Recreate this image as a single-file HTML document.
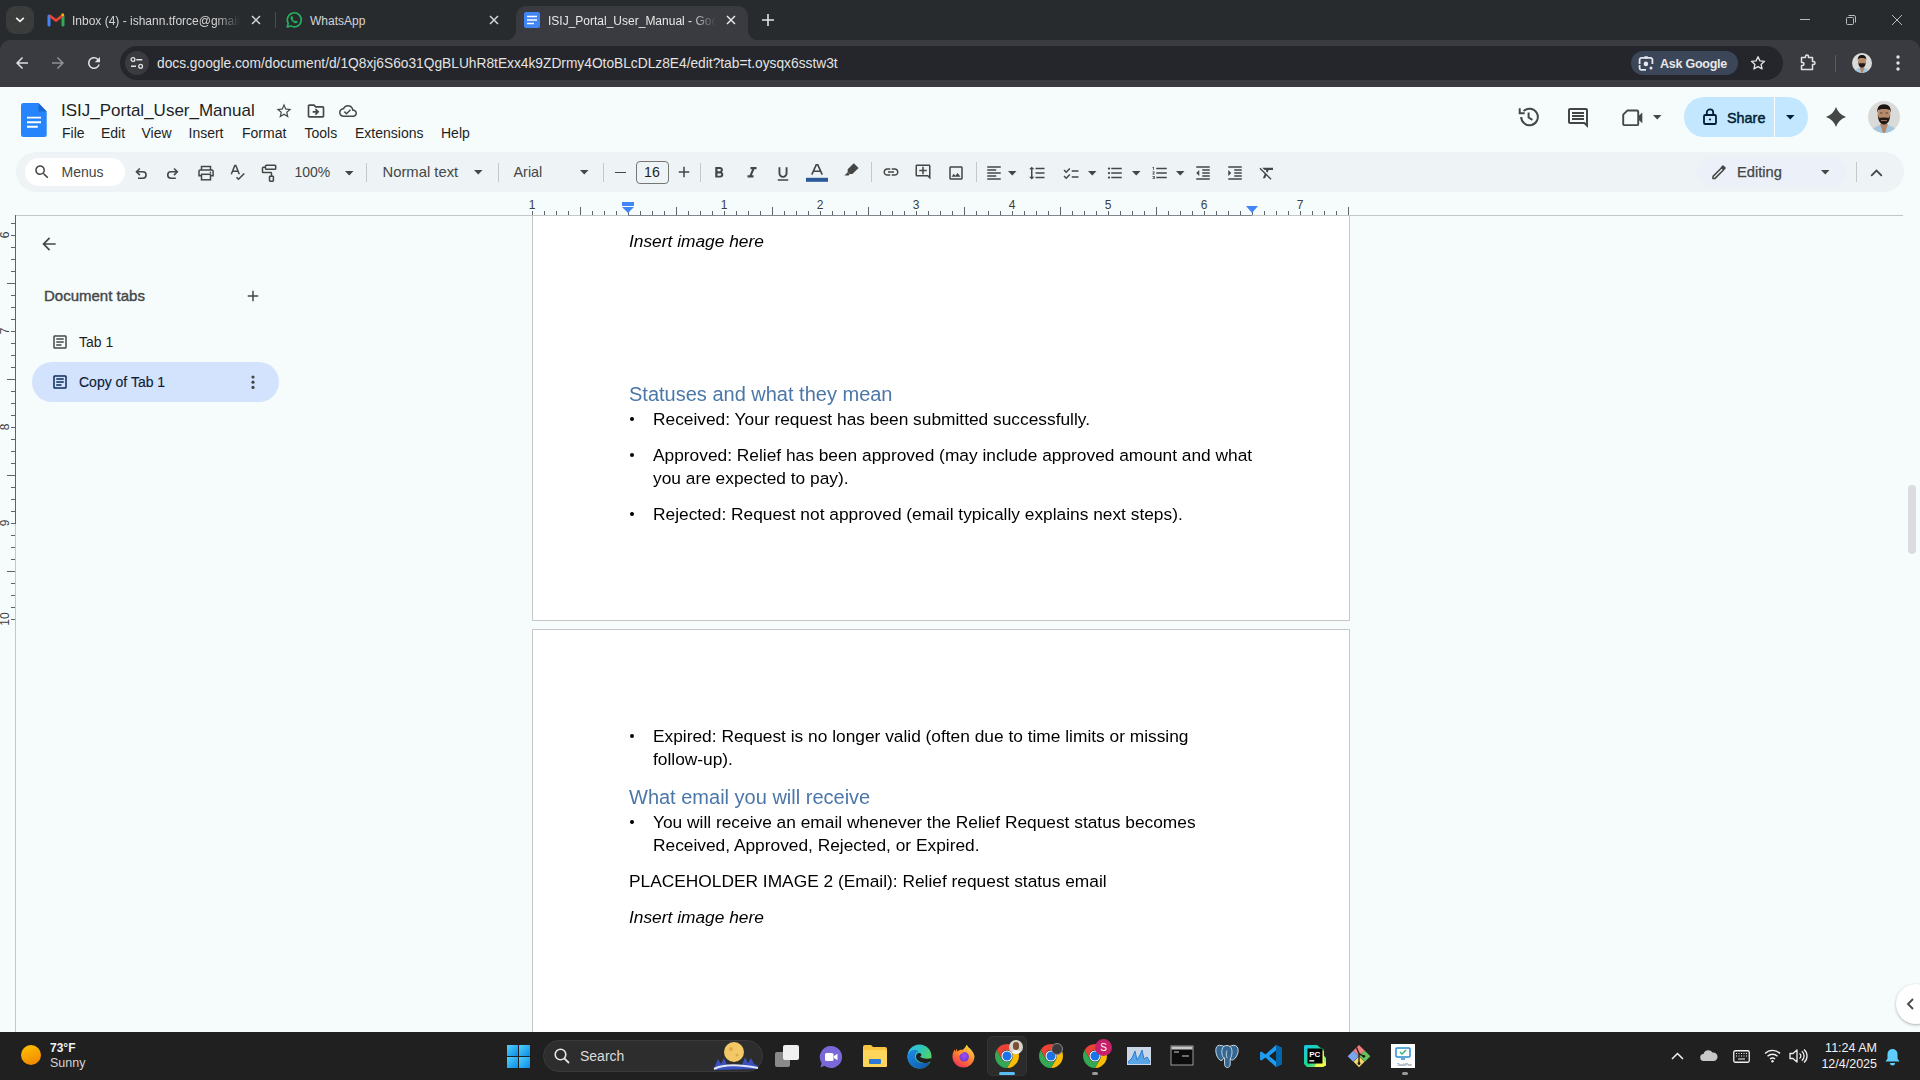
<!DOCTYPE html>
<html><head><meta charset="utf-8">
<style>
*{box-sizing:border-box;margin:0;padding:0}
html,body{width:1920px;height:1080px;overflow:hidden;background:#f6fcfc;font-family:"Liberation Sans",sans-serif}
.a{position:absolute}
svg{position:absolute;overflow:visible}
#tabstrip{left:0;top:0;width:1920px;height:87px;background:#282b2e}
#toolbar{left:0;top:40px;width:1920px;height:47px;background:#393b40;border-radius:10px 10px 0 0}
#omni{left:120px;top:46px;width:1663px;height:34px;border-radius:17px;background:#24262b}
.ttl{color:#e3e3e3;font-size:12px;white-space:nowrap}
#docs{left:0;top:87px;width:1920px;height:945px;background:#f6fcfc}
.menu{font-size:14px;color:#1f1f1f;top:125px}
.tb{left:16px;top:152px;width:1888px;height:40px;border-radius:20px;background:#eef3f6}
.page{background:#fff;border:1px solid #c7c7c7}
.dt{font-size:17.33px;color:#000;white-space:nowrap;line-height:23px;will-change:transform}
.it{font-style:italic}
.rl{font-size:12px;color:#3c4043;text-align:center;line-height:12px}
.bul{left:630px;width:4.2px;height:4.2px;border-radius:50%;background:#000;margin-top:0.4px}
.h2{font-size:20px;color:#4b77a8;white-space:nowrap;line-height:24px;will-change:transform}
#taskbar{left:0;top:1032px;width:1920px;height:48px;background:#202020}
</style></head><body>
<div id="tabstrip" class="a"></div>
<div id="toolbar" class="a"></div>
<div id="omni" class="a"></div>

<!-- tab strip -->
<div class="a" style="left:6px;top:6px;width:28px;height:28px;border-radius:9px;background:#3a3b3b"></div>
<svg style="left:15px;top:16px" width="10" height="8"><path d="M1.2 1.8 L5 5.4 L8.8 1.8" stroke="#f0f0f0" stroke-width="1.7" fill="none"/></svg>
<!-- gmail -->
<svg style="left:48px;top:13px" width="16" height="13" viewBox="0 0 16 13">
<path d="M1 12V3" stroke="#4285f4" stroke-width="3" stroke-linecap="round"/>
<path d="M15 12V3" stroke="#34a853" stroke-width="3" stroke-linecap="round"/>
<path d="M1.5 2.5 L8 7.5 L14.5 2.5" stroke="#ea4335" stroke-width="2.8" fill="none" stroke-linejoin="round"/>
<path d="M13.5 1.8 L14.8 1.5 L15.2 3" stroke="#fbbc04" stroke-width="2" fill="none"/>
</svg>
<div class="a ttl" style="left:72px;top:13.5px;width:168px;overflow:hidden;color:#d5d5d5;-webkit-mask-image:linear-gradient(90deg,#000 85%,transparent)">Inbox (4) - ishann.tforce@gmail.com</div>
<svg style="left:251px;top:15px" width="10" height="10"><path d="M1 1L9 9M9 1L1 9" stroke="#d5d5d5" stroke-width="1.5"/></svg>
<div class="a" style="left:275px;top:12px;width:1px;height:16px;background:#4a4b4f"></div>
<!-- whatsapp -->
<svg style="left:285px;top:11px" width="18" height="18" viewBox="0 0 18 18">
<path d="M2.2 16 L3.2 12.3 A7 7 0 1 1 5.8 14.9 Z" fill="none" stroke="#25b060" stroke-width="1.6" stroke-linejoin="round"/>
<path d="M6.3 5.4c.3-.4.8-.5 1.1 0l.7 1.4c.1.3 0 .6-.2.8l-.4.4c.5 1 1.3 1.8 2.3 2.3l.4-.4c.2-.2.5-.3.8-.2l1.4.7c.4.3.4.8 0 1.1-.6.7-1.4 1-2.3.7-2-.8-3.6-2.4-4.4-4.4-.3-.9 0-1.8.6-2.4z" fill="#25b060"/>
</svg>
<div class="a ttl" style="left:310px;top:13.5px;color:#d5d5d5">WhatsApp</div>
<svg style="left:489px;top:15px" width="10" height="10"><path d="M1 1L9 9M9 1L1 9" stroke="#d5d5d5" stroke-width="1.5"/></svg>
<!-- active tab -->
<div class="a" style="left:516px;top:6px;width:232px;height:40px;border-radius:10px 10px 0 0;background:#393b40"></div>
<div class="a" style="left:506px;top:30px;width:10px;height:10px;background:radial-gradient(circle at 0 0,transparent 10px,#393b40 10.5px)"></div>
<div class="a" style="left:748px;top:30px;width:10px;height:10px;background:radial-gradient(circle at 100% 0,transparent 10px,#393b40 10.5px)"></div>
<svg style="left:524px;top:12px" width="16" height="16" viewBox="0 0 16 16"><rect x="0" y="0" width="16" height="16" rx="2" fill="#4285f4"/><path d="M3 4.5H13M3 8H13M3 11.5H10" stroke="#fff" stroke-width="1.6"/></svg>
<div class="a ttl" style="left:548px;top:13.5px;width:168px;overflow:hidden;color:#e8e8e8;-webkit-mask-image:linear-gradient(90deg,#000 85%,transparent)">ISIJ_Portal_User_Manual - Google Docs</div>
<svg style="left:726px;top:15px" width="10" height="10"><path d="M1 1L9 9M9 1L1 9" stroke="#e8e8e8" stroke-width="1.5"/></svg>
<svg style="left:762px;top:14px" width="12" height="12"><path d="M6 0V12M0 6H12" stroke="#e3e3e3" stroke-width="1.6"/></svg>
<!-- window controls -->
<div class="a" style="left:1800px;top:19px;width:10px;height:1px;background:#b9b9b9"></div>
<svg style="left:1846px;top:15px" width="10" height="10"><rect x="0.5" y="2.5" width="7" height="7" rx="1" stroke="#b9b9b9" fill="none"/><path d="M2.5 0.5H8a1.5 1.5 0 0 1 1.5 1.5V7.5" stroke="#b9b9b9" fill="none"/></svg>
<svg style="left:1892px;top:15px" width="10" height="10"><path d="M0 0L10 10M10 0L0 10" stroke="#b9b9b9" stroke-width="1"/></svg>
<!-- toolbar icons -->
<svg style="left:13px;top:54px" width="18" height="18" viewBox="0 0 24 24"><path d="M20 11H7.83l5.59-5.59L12 4l-8 8 8 8 1.41-1.41L7.83 13H20v-2z" fill="#dfe1e5"/></svg>
<svg style="left:49px;top:54px" width="18" height="18" viewBox="0 0 24 24"><path d="M12 4l-1.41 1.41L16.17 11H4v2h12.17l-5.58 5.59L12 20l8-8z" fill="#8e9196"/></svg>
<svg style="left:84.8px;top:53.9px" width="18" height="18" viewBox="0 0 24 24"><path d="M17.65 6.35A7.958 7.958 0 0 0 12 4c-4.42 0-7.99 3.58-7.99 8s3.57 8 7.99 8c3.73 0 6.84-2.55 7.73-6h-2.08A5.99 5.99 0 0 1 12 18c-3.31 0-6-2.69-6-6s2.69-6 6-6c1.66 0 3.14.69 4.22 1.78L13 11h7V4l-2.35 2.35z" fill="#dfe1e5"/></svg>
<div class="a" style="left:125px;top:51px;width:24px;height:24px;border-radius:12px;background:#393b40"></div>
<svg style="left:130px;top:56px" width="14" height="14" viewBox="0 0 14 14"><circle cx="3" cy="3.5" r="1.9" stroke="#e3e3e3" stroke-width="1.3" fill="none"/><path d="M6.3 3.7H12.3M1 10.3H6" stroke="#e3e3e3" stroke-width="1.4"/><circle cx="10.6" cy="10.3" r="1.9" stroke="#e3e3e3" stroke-width="1.3" fill="none"/></svg>
<div class="a" style="left:157px;top:55.5px;font-size:13.75px;color:#e3e3e3;white-space:nowrap;letter-spacing:0px">docs.google.com/document/d/1Q8xj6S6o31QgBLUhR8tExx4k9ZDrmy4OtoBLcDLz8E4/edit?tab=t.oysqx6sstw3t</div>
<div class="a" style="left:1631px;top:51px;width:107px;height:23.5px;border-radius:12px;background:#3b4658"></div>
<svg style="left:1638px;top:55px" width="16" height="17" viewBox="0 0 16 17"><path d="M1.6 9V4.8A1.9 1.9 0 0 1 3.5 2.9H12.5A1.9 1.9 0 0 1 14.4 4.8V9" stroke="#e6e8ee" stroke-width="1.8" fill="none"/><rect x="6.3" y="1.2" width="3.6" height="2.2" rx=".6" fill="#e6e8ee"/><path d="M1.6 10V13A1.9 1.9 0 0 0 3.5 14.9H8" stroke="#e6e8ee" stroke-width="1.8" fill="none"/><circle cx="7.9" cy="8.9" r="2.3" fill="#e6e8ee"/><circle cx="13" cy="13" r="1.5" fill="#e6e8ee"/></svg>
<div class="a" style="left:1660px;top:57px;font-size:12.5px;font-weight:bold;color:#e8e8e8;white-space:nowrap;letter-spacing:-0.25px;line-height:15px">Ask Google</div>
<svg style="left:1750px;top:55px" width="16" height="16" viewBox="0 0 24 24"><path d="M12 2.5l2.9 6.3 6.9.7-5.2 4.6 1.5 6.8L12 17.4l-6.1 3.5 1.5-6.8-5.2-4.6 6.9-.7z" stroke="#e3e3e3" stroke-width="2" fill="none" stroke-linejoin="round"/></svg>
<svg style="left:1800px;top:54px" width="17" height="17" viewBox="0 0 17 17"><path d="M1.5 3.5H5.5V2.5a1.5 1.5 0 0 1 3 0V3.5H12.5V7.5h1a1.5 1.5 0 0 1 0 3h-1V15.5H1.5V11.5h1a1.5 1.5 0 0 0 0-3h-1z" stroke="#e3e3e3" stroke-width="1.5" fill="none" stroke-linejoin="round"/></svg>
<div class="a" style="left:1835px;top:55px;width:1px;height:17px;background:#5a5b5e"></div>
<svg style="left:1852px;top:53px" width="20" height="20" viewBox="0 0 32 32"><defs><clipPath id="av2"><circle cx="16" cy="16" r="16"/></clipPath></defs><g clip-path="url(#av2)"><rect width="32" height="32" fill="#dadad8"/><path d="M2 32C4 27 9 25 12 24H20C23 25 28 27 30 32Z" fill="#a6c6de"/><path d="M12 23H20L17 32H15Z" fill="#b48a6c"/><ellipse cx="16" cy="13.5" rx="6.3" ry="8" fill="#b58b6b"/><path d="M9.2 12C9 6 11.5 3.3 16 3.3S23.2 6 22.8 12L21.8 9C20 7.5 12 7.5 10.2 9Z" fill="#1a1512"/><path d="M9.8 14C10 19 12 23.5 16 23.5S22 19 22.2 14L21 17C19.5 16.3 12.5 16.3 11 17Z" fill="#231a16"/></g></svg>
<svg style="left:1896px;top:55px" width="4" height="16"><circle cx="2" cy="2" r="1.7" fill="#e3e3e3"/><circle cx="2" cy="8" r="1.7" fill="#e3e3e3"/><circle cx="2" cy="14" r="1.7" fill="#e3e3e3"/></svg>

<div id="docs" class="a"></div>
<div class="a tb"></div>
<div class="a page" style="left:532px;top:215px;width:818px;height:406px;border-top:none"></div>
<div class="a page" style="left:532px;top:629px;width:818px;height:420px"></div>

<!--HEADER-->
<svg style="left:21px;top:103px" width="26" height="34" viewBox="0 0 26 34"><path d="M2.5 0H17.5L25.7 8.6V31.5A2.5 2.5 0 0 1 23.2 34H2.5A2.5 2.5 0 0 1 0 31.5V2.5A2.5 2.5 0 0 1 2.5 0Z" fill="#2684fc"/><path d="M17.5 0L25.7 8.6H17.5Z" fill="#1a68d6"/><path d="M6 14.6H20M6 19.3H20M6 23.8H16.8" stroke="#fff" stroke-width="1.9"/></svg>
<div class="a" style="left:61px;top:101px;font-size:17px;color:#1f1f1f;white-space:nowrap;line-height:16px;line-height:20px">ISIJ_Portal_User_Manual</div>
<svg style="left:275px;top:102px" width="18" height="18" viewBox="0 0 24 24"><path d="M22 9.24l-7.19-.62L12 2 9.19 8.63 2 9.24l5.46 4.73L5.82 21 12 17.27 18.18 21l-1.63-7.03L22 9.24zM12 15.4l-3.76 2.27 1-4.28-3.32-2.88 4.38-.38L12 6.1l1.71 4.04 4.38.38-3.32 2.88 1 4.28L12 15.4z" fill="#444746"/></svg>
<svg style="left:306px;top:101px" width="20" height="20" viewBox="0 0 24 24"><path d="M20 6h-8l-2-2H4c-1.1 0-1.99.9-1.99 2L2 18c0 1.1.9 2 2 2h16c1.1 0 2-.9 2-2V8c0-1.1-.9-2-2-2zm0 12H4V6h5.17l2 2H20v10zm-7.84-6H8v2h4.16l-1.59 1.59L11.99 17 16 13.01 11.99 9l-1.41 1.41L12.16 12z" fill="#444746"/></svg>
<svg style="left:339px;top:102px" width="18" height="18" viewBox="0 0 24 24"><path d="M19.35 10.04C18.67 6.59 15.64 4 12 4 9.11 4 6.6 5.64 5.35 8.04 2.34 8.36 0 10.91 0 14c0 3.31 2.69 6 6 6h13c2.76 0 5-2.24 5-5 0-2.64-2.05-4.78-4.65-4.96zM19 18H6c-2.21 0-4-1.79-4-4 0-2.05 1.53-3.76 3.56-3.97l1.07-.11.5-.95C8.08 7.14 9.94 6 12 6c2.62 0 4.88 1.86 5.39 4.43l.3 1.5 1.53.11c1.56.1 2.78 1.41 2.78 2.96 0 1.65-1.35 3-3 3zm-9-3.82l-2.09-2.09L6.5 13.5 10 17l6.01-6.01-1.41-1.41z" fill="#444746"/></svg>
<div class="a" style="left:62px;top:125px;font-size:14px;color:#1f1f1f;white-space:nowrap;line-height:16px;">File</div>
<div class="a" style="left:101px;top:125px;font-size:14px;color:#1f1f1f;white-space:nowrap;line-height:16px;">Edit</div>
<div class="a" style="left:141.5px;top:125px;font-size:14px;color:#1f1f1f;white-space:nowrap;line-height:16px;">View</div>
<div class="a" style="left:188.5px;top:125px;font-size:14px;color:#1f1f1f;white-space:nowrap;line-height:16px;">Insert</div>
<div class="a" style="left:242px;top:125px;font-size:14px;color:#1f1f1f;white-space:nowrap;line-height:16px;">Format</div>
<div class="a" style="left:304.5px;top:125px;font-size:14px;color:#1f1f1f;white-space:nowrap;line-height:16px;">Tools</div>
<div class="a" style="left:355px;top:125px;font-size:14px;color:#1f1f1f;white-space:nowrap;line-height:16px;">Extensions</div>
<div class="a" style="left:441px;top:125px;font-size:14px;color:#1f1f1f;white-space:nowrap;line-height:16px;">Help</div>
<svg style="left:1517px;top:105px" width="24" height="24" viewBox="0 0 24 24"><path d="M4.2 12A8.3 8.3 0 1 0 6.6 6.1" stroke="#444746" stroke-width="2" fill="none"/><path d="M2.7 3.2V8.2H7.7" stroke="#444746" stroke-width="2" fill="none" stroke-linejoin="miter"/><path d="M11.6 7.5V12.5L15.4 14.8" stroke="#444746" stroke-width="2" fill="none"/></svg>
<svg style="left:1566px;top:106px" width="24" height="24" viewBox="0 0 24 24"><path d="M21.99 4c0-1.1-.89-2-1.99-2H4c-1.1 0-2 .9-2 2v12c0 1.1.9 2 2 2h14l4 4-.01-18zM20 4v13.17L18.83 16H4V4h16zM6 12h12v2H6zm0-3h12v2H6zm0-3h12v2H6z" fill="#444746"/></svg>
<svg style="left:1621px;top:109px" width="24" height="19" viewBox="0 0 24 20"><path d="M6.2 1.5H16.2A1.3 1.3 0 0 1 17.5 2.8V15.7A1.3 1.3 0 0 1 16.2 17H3A1.3 1.3 0 0 1 1.7 15.7V6Z" stroke="#444746" stroke-width="2" fill="none" stroke-linejoin="round"/><path d="M17.5 7.5L21.8 3.6V14.9L17.5 11Z" fill="#444746"/></svg>
<svg style="left:1653px;top:115px" width="9" height="5"><path d="M0 0H8.5L4.25 4.5Z" fill="#444746"/></svg>
<div class="a" style="left:1684px;top:97px;width:124px;height:40px;border-radius:20px;background:#c2e7ff"></div>
<div class="a" style="left:1774px;top:97px;width:1px;height:40px;background:#fbfdff"></div>
<svg style="left:1703px;top:108px" width="14" height="17" viewBox="0 0 14 17"><rect x="1" y="7" width="12" height="9" rx="1.3" stroke="#001d35" stroke-width="1.8" fill="none"/><path d="M3.8 7V4.6A3.2 3.2 0 0 1 10.2 4.6V7" stroke="#001d35" stroke-width="1.8" fill="none"/><circle cx="7" cy="11.5" r="1.1" fill="#001d35"/></svg>
<div class="a" style="left:1727px;top:109px;font-size:14.4px;color:#001d35;white-space:nowrap;line-height:16px;font-weight:normal;-webkit-text-stroke:0.45px #001d35;line-height:18px">Share</div>
<svg style="left:1786px;top:115px" width="9" height="5"><path d="M0 0H8.5L4.25 4.5Z" fill="#001d35"/></svg>
<svg style="left:1826px;top:107px" width="20" height="20" viewBox="0 0 20 20"><path d="M10 0Q12.6 7.4 20 10Q12.6 12.6 10 20Q7.4 12.6 0 10Q7.4 7.4 10 0Z" fill="#444746"/></svg>
<svg style="left:1868px;top:101px" width="32" height="32" viewBox="0 0 32 32"><defs><clipPath id="av"><circle cx="16" cy="16" r="16"/></clipPath></defs><g clip-path="url(#av)"><rect width="32" height="32" fill="#dadad8"/><path d="M2 32C4 27 9 25 12 24H20C23 25 28 27 30 32Z" fill="#a6c6de"/><path d="M12 23H20L17 32H15Z" fill="#b48a6c"/><ellipse cx="16" cy="13.5" rx="6.3" ry="8" fill="#b58b6b"/><path d="M9.2 12C9 6 11.5 3.3 16 3.3S23.2 6 22.8 12L21.8 9C20 7.5 12 7.5 10.2 9Z" fill="#1a1512"/><path d="M9.8 14C10 19 12 23.5 16 23.5S22 19 22.2 14L21 17C19.5 16.3 12.5 16.3 11 17Z" fill="#231a16"/><path d="M13 19.5H19" stroke="#9a7060" stroke-width="1.2"/><path d="M12 12H14.5M17.5 12H20" stroke="#5a3e30" stroke-width="1"/></g></svg>
<div class="a" style="left:25px;top:158px;width:100px;height:28px;border-radius:14px;background:#fff"></div>
<svg style="left:33px;top:163px" width="18" height="18" viewBox="0 0 24 24"><path d="M15.5 14h-.79l-.28-.27C15.41 12.59 16 11.11 16 9.5 16 5.91 13.09 3 9.5 3S3 5.91 3 9.5 5.91 16 9.5 16c1.61 0 3.09-.59 4.23-1.57l.27.28v.79l5 4.99L20.49 19l-4.99-5zm-6 0C7.01 14 5 11.99 5 9.5S7.01 5 9.5 5 14 7.01 14 9.5 11.99 14 9.5 14z" fill="#444746"/></svg>
<div class="a" style="left:61.5px;top:164px;font-size:14px;color:#444746;white-space:nowrap;line-height:16px;">Menus</div>
<svg style="left:134px;top:166px" width="14" height="16"><path d="M2.5 5.8H8.8A2.5 2.5 0 0 1 8.8 12.3H4" stroke="#444746" stroke-width="1.6" fill="none"/><path d="M5.8 2.5L2.5 5.8L5.8 9.1" stroke="#444746" stroke-width="1.6" fill="none"/></svg>
<svg style="left:165px;top:166px" width="16" height="16"><path d="M12.2 5.8H6A2.5 2.5 0 0 0 6 12.3H10.8" stroke="#444746" stroke-width="1.6" fill="none"/><path d="M9 2.5L12.3 5.8L9 9.1" stroke="#444746" stroke-width="1.6" fill="none"/></svg>
<svg style="left:197px;top:165px" width="18" height="17"><path d="M4.5 5V1.5H13.5V5" stroke="#444746" stroke-width="1.5" fill="none"/><path d="M4.3 10.8H2V6.3A1.3 1.3 0 0 1 3.3 5H14.8A1.3 1.3 0 0 1 16.1 6.3V10.8H13.8" stroke="#444746" stroke-width="1.5" fill="none"/><rect x="4.5" y="9.3" width="9" height="5.5" stroke="#444746" stroke-width="1.5" fill="none"/><circle cx="13.4" cy="7.4" r=".8" fill="#444746"/></svg>
<svg style="left:229px;top:164px" width="18" height="18"><path d="M2.3 10.3L5.8 1.5H6.8L10.3 10.3M3.6 7.2H9" stroke="#444746" stroke-width="1.5" fill="none"/><path d="M7.5 13.2L9.5 15.3L15.3 9.5" stroke="#444746" stroke-width="1.5" fill="none"/></svg>
<svg style="left:260px;top:164px" width="18" height="19"><rect x="5.5" y="1.2" width="10.2" height="4" rx=".8" stroke="#444746" stroke-width="1.5" fill="none"/><path d="M5.5 3.2H3.3A.8.8 0 0 0 2.5 4V7.7A.8.8 0 0 0 3.3 8.5H10.8A.7.7 0 0 1 11.5 9.2V12.2" stroke="#444746" stroke-width="1.5" fill="none"/><rect x="9.5" y="12.2" width="3.9" height="5" rx=".6" stroke="#444746" stroke-width="1.5" fill="none"/></svg>
<div class="a" style="left:294.5px;top:164px;font-size:14px;color:#444746;white-space:nowrap;line-height:16px;">100%</div>
<svg style="left:345px;top:171px" width="9" height="5"><path d="M0 0H8.5L4.25 4.5Z" fill="#444746"/></svg>
<div class="a" style="left:366px;top:163px;width:1px;height:19px;background:#c7c7c7"></div>
<div class="a" style="left:382.5px;top:164px;font-size:14.8px;color:#444746;white-space:nowrap;line-height:16px;">Normal text</div>
<svg style="left:473.5px;top:170px" width="9" height="5"><path d="M0 0H8.5L4.25 4.5Z" fill="#444746"/></svg>
<div class="a" style="left:497.5px;top:163px;width:1px;height:19px;background:#c7c7c7"></div>
<div class="a" style="left:513.5px;top:164px;font-size:14.4px;color:#444746;white-space:nowrap;line-height:16px;">Arial</div>
<svg style="left:580px;top:170px" width="9" height="5"><path d="M0 0H8.5L4.25 4.5Z" fill="#444746"/></svg>
<div class="a" style="left:603px;top:163px;width:1px;height:19px;background:#c7c7c7"></div>
<div class="a" style="left:615px;top:171.5px;width:10.5px;height:1.6px;background:#444746"></div>
<div class="a" style="left:635.5px;top:160.5px;width:33px;height:23.5px;border:1px solid #747775;border-radius:4px"></div>
<div class="a" style="left:644px;top:164px;font-size:14.2px;color:#1f1f1f;white-space:nowrap;line-height:16px;">16</div>
<svg style="left:675px;top:163px" width="18" height="18" viewBox="0 0 24 24"><path d="M19 13h-6v6h-2v-6H5v-2h6V5h2v6h6v2z" fill="#444746"/></svg>
<div class="a" style="left:700px;top:163px;width:1px;height:19px;background:#c7c7c7"></div>
<svg style="left:710px;top:164px" width="18" height="18" viewBox="0 0 24 24"><path d="M15.6 10.79c.97-.67 1.65-1.77 1.65-2.79 0-2.26-1.75-4-4-4H7v14h7.04c2.09 0 3.71-1.7 3.71-3.79 0-1.52-.86-2.82-2.15-3.42zM10 6.5h3c.83 0 1.5.67 1.5 1.5s-.67 1.5-1.5 1.5h-3v-3zm3.5 9H10v-3h3.5c.83 0 1.5.67 1.5 1.5s-.67 1.5-1.5 1.5z" fill="#444746"/></svg>
<svg style="left:742.5px;top:164px" width="18" height="18" viewBox="0 0 24 24"><path d="M10 4v3h2.21l-3.42 8H6v3h8v-3h-2.21l3.42-8H18V4z" fill="#444746"/></svg>
<svg style="left:774px;top:164.5px" width="18" height="18" viewBox="0 0 24 24"><path d="M12 17c3.31 0 6-2.69 6-6V3h-2.5v8c0 1.93-1.57 3.5-3.5 3.5S8.5 12.93 8.5 11V3H6v8c0 3.31 2.69 6 6 6zm-7 2v2h14v-2H5z" fill="#444746"/></svg>
<svg style="left:806px;top:163px" width="22" height="19"><path d="M5.8 11.6L10.2 1.8H11.8L16.2 11.6M7.4 8.3H14.6" stroke="#444746" stroke-width="1.6" fill="none"/><rect x="0" y="14.8" width="22" height="4" fill="#2c5a98"/></svg>
<svg style="left:843px;top:162px" width="17" height="15" viewBox="0 0 17 15"><path d="M10.8 1.2L15.6 5.9 9.4 12.1H6.5L4.7 10.3V7.3Z" fill="#444746"/><path d="M4.6 10.2L1.5 13.6H5.6L6.6 12.2Z" fill="#444746"/></svg>
<div class="a" style="left:871px;top:162px;width:1px;height:20px;background:#c7c7c7"></div>
<svg style="left:881.5px;top:163px" width="18" height="18" viewBox="0 0 24 24"><path d="M3.9 12c0-1.71 1.39-3.1 3.1-3.1h4V7H7c-2.76 0-5 2.24-5 5s2.24 5 5 5h4v-1.9H7c-1.71 0-3.1-1.39-3.1-3.1zM8 13h8v-2H8v2zm9-6h-4v1.9h4c1.71 0 3.1 1.39 3.1 3.1s-1.39 3.1-3.1 3.1h-4V17h4c2.76 0 5-2.24 5-5s-2.24-5-5-5z" fill="#444746"/></svg>
<svg style="left:913.5px;top:163px" width="18" height="18" viewBox="0 0 24 24"><path d="M22 4c0-1.1-.9-2-2-2H4c-1.1 0-1.99.9-1.99 2L2 16c0 1.1.9 2 2 2h14l4 4V4zm-2 13.17L18.83 16H4V4h16v13.17zM13 5h-2v4H7v2h4v4h2v-4h4V9h-4z" fill="#444746"/></svg>
<svg style="left:946.75px;top:163.75px" width="18" height="18" viewBox="0 0 24 24"><path d="M19 5v14H5V5h14m0-2H5c-1.1 0-2 .9-2 2v14c0 1.1.9 2 2 2h14c1.1 0 2-.9 2-2V5c0-1.1-.9-2-2-2zm-4.86 8.86l-3 3.87L9 13.14 6 17h12l-3.86-5.14z" fill="#444746"/></svg>
<div class="a" style="left:976px;top:162px;width:1px;height:20px;background:#c7c7c7"></div>
<svg style="left:984.75px;top:163.75px" width="18" height="18" viewBox="0 0 24 24"><path d="M15 15H3v2h12v-2zm0-8H3v2h12V7zM3 13h18v-2H3v2zm0 8h18v-2H3v2zM3 3v2h18V3H3z" fill="#444746"/></svg>
<svg style="left:1008px;top:171px" width="9" height="5"><path d="M0 0H8.5L4.25 4.5Z" fill="#444746"/></svg>
<svg style="left:1027.9px;top:163.5px" width="18" height="18" viewBox="0 0 24 24"><path d="M6 7h2.5L5 3.5 1.5 7H4v10H1.5L5 20.5 8.5 17H6V7zm4-2v2h12V5H10zm0 14h12v-2H10v2zm0-6h12v-2H10v2z" fill="#444746"/></svg>
<svg style="left:1061.5px;top:164.5px" width="18" height="18" viewBox="0 0 24 24"><path d="M22 7h-9v2h9V7zm0 8h-9v2h9v-2zM5.54 11L2 7.46l1.41-1.41 2.12 2.12 4.24-4.24 1.41 1.41L5.54 11zm0 8L2 15.46l1.41-1.41 2.12 2.12 4.24-4.24 1.41 1.41L5.54 19z" fill="#444746"/></svg>
<svg style="left:1088px;top:171px" width="9" height="5"><path d="M0 0H8.5L4.25 4.5Z" fill="#444746"/></svg>
<svg style="left:1106.1px;top:163.5px" width="18" height="18" viewBox="0 0 24 24"><path d="M4 10.5c-.83 0-1.5.67-1.5 1.5s.67 1.5 1.5 1.5 1.5-.67 1.5-1.5-.67-1.5-1.5-1.5zm0-6c-.83 0-1.5.67-1.5 1.5S3.17 7.5 4 7.5 5.5 6.83 5.5 6 4.83 4.5 4 4.5zm0 12c-.83 0-1.5.68-1.5 1.5s.68 1.5 1.5 1.5 1.5-.68 1.5-1.5-.67-1.5-1.5-1.5zM7 19h14v-2H7v2zm0-6h14v-2H7v2zm0-8v2h14V5H7z" fill="#444746"/></svg>
<svg style="left:1132px;top:171px" width="9" height="5"><path d="M0 0H8.5L4.25 4.5Z" fill="#444746"/></svg>
<svg style="left:1150.5px;top:163.5px" width="18" height="18" viewBox="0 0 24 24"><path d="M2 17h2v.5H3v1h1v.5H2v1h3v-4H2v1zm1-9h1V4H2v1h1v3zm-1 3h1.8L2 13.1v.9h3v-1H3.2L5 10.9V10H2v1zm5-6v2h14V5H7zm0 14h14v-2H7v2zm0-6h14v-2H7v2z" fill="#444746"/></svg>
<svg style="left:1176px;top:171px" width="9" height="5"><path d="M0 0H8.5L4.25 4.5Z" fill="#444746"/></svg>
<svg style="left:1193.75px;top:163.75px" width="18" height="18" viewBox="0 0 24 24"><path d="M11 17h10v-2H11v2zm-8-5l4 4V8l-4 4zm0 9h18v-2H3v2zM3 3v2h18V3H3zm8 6h10V7H11v2zm0 4h10v-2H11v2z" fill="#444746"/></svg>
<svg style="left:1225.75px;top:163.75px" width="18" height="18" viewBox="0 0 24 24"><path d="M3 21h18v-2H3v2zM3 8v8l4-4-4-4zm8 9h10v-2H11v2zM3 3v2h18V3H3zm8 6h10V7H11v2zm0 4h10v-2H11v2z" fill="#444746"/></svg>
<svg style="left:1257.5px;top:163.5px" width="18" height="18" viewBox="0 0 24 24"><path d="M3.27 5L2 6.27l6.97 6.97L6.5 19h3l1.57-3.66L16.73 21 18 19.73 3.55 5.27 3.27 5zM6 5v.18L8.82 8h2.4l-.72 1.68 2.1 2.1L14.21 8H20V5H6z" fill="#444746"/></svg>
<div class="a" style="left:1696px;top:157px;width:151px;height:30px;border-radius:15px;background:#ecf0f8"></div>
<svg style="left:1709.75px;top:162.75px" width="18" height="18" viewBox="0 0 24 24"><path d="M4 20.5V17.8L15.5 6.3 18.2 9 6.7 20.5Z" stroke="#444746" stroke-width="2" fill="none" stroke-linejoin="miter"/><path d="M14.2 5.6L16.6 3.2A1 1 0 0 1 18 3.2L20.8 6A1 1 0 0 1 20.8 7.4L18.4 9.8Z" fill="#444746"/></svg>
<div class="a" style="left:1737px;top:164px;font-size:14.7px;color:#444746;white-space:nowrap;line-height:16px;-webkit-text-stroke:0.25px #444746">Editing</div>
<svg style="left:1821px;top:170px" width="9" height="5"><path d="M0 0H8.5L4.25 4.5Z" fill="#444746"/></svg>
<div class="a" style="left:1856px;top:162px;width:1px;height:20px;background:#c7c7c7"></div>
<svg style="left:1870px;top:169px" width="13" height="8"><path d="M1.2 6.8L6.5 1.5L11.8 6.8" stroke="#444746" stroke-width="1.8" fill="none"/></svg>
<svg style="left:39px;top:234px" width="20" height="20" viewBox="0 0 24 24"><path d="M20 11H7.83l5.59-5.59L12 4l-8 8 8 8 1.41-1.41L7.83 13H20v-2z" fill="#444746"/></svg>
<div class="a" style="left:44px;top:287.5px;font-size:15px;color:#444746;white-space:nowrap;line-height:16px;-webkit-text-stroke:0.4px #444746">Document tabs</div>
<svg style="left:244px;top:287px" width="18" height="18" viewBox="0 0 24 24"><path d="M19 13h-6v6h-2v-6H5v-2h6V5h2v6h6v2z" fill="#444746"/></svg>
<svg style="left:51px;top:333px" width="18" height="18" viewBox="0 0 24 24"><path d="M19 5v14H5V5h14m0-2H5c-1.1 0-2 .9-2 2v14c0 1.1.9 2 2 2h14c1.1 0 2-.9 2-2V5c0-1.1-.9-2-2-2zM14 17H7v-2h7v2zm3-4H7v-2h10v2zm0-4H7V7h10v2z" fill="#444746"/></svg>
<div class="a" style="left:79px;top:334px;font-size:14px;color:#1f1f1f;white-space:nowrap;line-height:16px;">Tab 1</div>
<div class="a" style="left:32px;top:362px;width:247px;height:40px;border-radius:20px;background:#d3e3fd"></div>
<svg style="left:51px;top:373px" width="18" height="18" viewBox="0 0 24 24"><path d="M19 5v14H5V5h14m0-2H5c-1.1 0-2 .9-2 2v14c0 1.1.9 2 2 2h14c1.1 0 2-.9 2-2V5c0-1.1-.9-2-2-2zM14 17H7v-2h7v2zm3-4H7v-2h10v2zm0-4H7V7h10v2z" fill="#0b2a5a"/></svg>
<div class="a" style="left:79px;top:374px;font-size:14px;color:#0b1d3a;white-space:nowrap;line-height:16px;-webkit-text-stroke:0.15px #0b1d3a">Copy of Tab 1</div>
<svg style="left:251px;top:375px" width="4" height="15"><circle cx="2" cy="2" r="1.6" fill="#444746"/><circle cx="2" cy="7.2" r="1.6" fill="#444746"/><circle cx="2" cy="12.4" r="1.6" fill="#444746"/></svg>
<!--/HEADER-->
<!-- ruler -->
<div class="a" style="left:15px;top:215px;width:1888px;height:1px;background:#c4c7c5"></div>
<div class="a" style="left:628px;top:215px;width:624px;height:1px;background:#80868b"></div>
<svg style="left:0;top:0" width="1920" height="230"><path d="M532.5 211V215 M544.5 211V215 M556.5 211V215 M568.5 211V215 M580.5 207V215 M592.5 211V215 M604.5 211V215 M616.5 211V215 M628.5 211V215 M640.5 211V215 M652.5 211V215 M664.5 211V215 M676.5 207V215 M688.5 211V215 M700.5 211V215 M712.5 211V215 M724.5 211V215 M736.5 211V215 M748.5 211V215 M760.5 211V215 M772.5 207V215 M784.5 211V215 M796.5 211V215 M808.5 211V215 M820.5 211V215 M832.5 211V215 M844.5 211V215 M856.5 211V215 M868.5 207V215 M880.5 211V215 M892.5 211V215 M904.5 211V215 M916.5 211V215 M928.5 211V215 M940.5 211V215 M952.5 211V215 M964.5 207V215 M976.5 211V215 M988.5 211V215 M1000.5 211V215 M1012.5 211V215 M1024.5 211V215 M1036.5 211V215 M1048.5 211V215 M1060.5 207V215 M1072.5 211V215 M1084.5 211V215 M1096.5 211V215 M1108.5 211V215 M1120.5 211V215 M1132.5 211V215 M1144.5 211V215 M1156.5 207V215 M1168.5 211V215 M1180.5 211V215 M1192.5 211V215 M1204.5 211V215 M1216.5 211V215 M1228.5 211V215 M1240.5 211V215 M1252.5 207V215 M1264.5 211V215 M1276.5 211V215 M1288.5 211V215 M1300.5 211V215 M1312.5 211V215 M1324.5 211V215 M1336.5 211V215 M1348.5 207V215" stroke="#5f6368" stroke-width="1"/></svg>
<div class="a rl" style="left:522px;top:199px;width:20px">1</div><div class="a rl" style="left:714px;top:199px;width:20px">1</div><div class="a rl" style="left:810px;top:199px;width:20px">2</div><div class="a rl" style="left:906px;top:199px;width:20px">3</div><div class="a rl" style="left:1002px;top:199px;width:20px">4</div><div class="a rl" style="left:1098px;top:199px;width:20px">5</div><div class="a rl" style="left:1194px;top:199px;width:20px">6</div><div class="a rl" style="left:1290px;top:199px;width:20px">7</div>
<svg style="left:622px;top:202px" width="13" height="12"><rect x="0" y="0" width="12" height="4" fill="#4285f4"/><path d="M0 5H12L6 11Z" fill="#4285f4"/></svg>
<svg style="left:1246px;top:206px" width="13" height="8"><path d="M0 0H12L6 7Z" fill="#4285f4"/></svg>
<svg style="left:0;top:0" width="20" height="1040"><path d="M11 223.5H15 M11 235.5H15 M11 247.5H15 M11 259.5H15 M11 271.5H15 M7 283.5H15 M11 295.5H15 M11 307.5H15 M11 319.5H15 M11 331.5H15 M11 343.5H15 M11 355.5H15 M11 367.5H15 M7 379.5H15 M11 391.5H15 M11 403.5H15 M11 415.5H15 M11 427.5H15 M11 439.5H15 M11 451.5H15 M11 463.5H15 M7 475.5H15 M11 487.5H15 M11 499.5H15 M11 511.5H15 M11 523.5H15 M11 535.5H15 M11 547.5H15 M11 559.5H15 M7 571.5H15 M11 583.5H15 M11 595.5H15 M11 607.5H15 M11 619.5H15" stroke="#5f6368" stroke-width="1"/><path d="M15.5 215V524" stroke="#5f6368"/><path d="M15.5 524V1032" stroke="#c4c7c5"/></svg>
<div class="a rl" style="left:-5px;top:228.5px;width:20px;transform:rotate(-90deg)">6</div><div class="a rl" style="left:-5px;top:324.5px;width:20px;transform:rotate(-90deg)">7</div><div class="a rl" style="left:-5px;top:420.5px;width:20px;transform:rotate(-90deg)">8</div><div class="a rl" style="left:-5px;top:516.5px;width:20px;transform:rotate(-90deg)">9</div><div class="a rl" style="left:-5px;top:612.5px;width:20px;transform:rotate(-90deg)">10</div>

<!-- page content -->
<div class="a dt it" style="left:629px;top:229.5px">Insert image here</div>
<div class="a h2" style="left:629px;top:381.5px">Statuses and what they mean</div>
<div class="a bul" style="top:416.5px"></div>
<div class="a dt" style="left:653px;top:407.5px">Received: Your request has been submitted successfully.</div>
<div class="a bul" style="top:452.5px"></div>
<div class="a dt" style="left:653px;top:443.5px">Approved: Relief has been approved (may include approved amount and what<br>you are expected to pay).</div>
<div class="a bul" style="top:511.5px"></div>
<div class="a dt" style="left:653px;top:502.5px">Rejected: Request not approved (email typically explains next steps).</div>
<div class="a bul" style="top:733.5px"></div>
<div class="a dt" style="left:653px;top:724.5px">Expired: Request is no longer valid (often due to time limits or missing<br>follow-up).</div>
<div class="a h2" style="left:629px;top:784.5px">What email you will receive</div>
<div class="a bul" style="top:819.5px"></div>
<div class="a dt" style="left:653px;top:810.5px">You will receive an email whenever the Relief Request status becomes<br>Received, Approved, Rejected, or Expired.</div>
<div class="a dt" style="left:629px;top:869.5px">PLACEHOLDER IMAGE 2 (Email): Relief request status email</div>
<div class="a dt it" style="left:629px;top:905.5px">Insert image here</div>

<div id="taskbar" class="a"></div>
<!--TASK-->
<div class="a" style="left:1908px;top:485px;width:8px;height:69px;border-radius:4px;background:#dadce0"></div>
<div class="a" style="left:1896px;top:984px;width:40px;height:40px;border-radius:50%;background:#fff;box-shadow:0 1px 3px rgba(0,0,0,.3)"></div>
<svg style="left:1906px;top:998px" width="9" height="12"><path d="M7 1L2 6L7 11" stroke="#444746" stroke-width="1.8" fill="none"/></svg>
<div class="a" style="left:21px;top:1045px;width:20px;height:20px;border-radius:50%;background:linear-gradient(160deg,#ffc400,#f08200)"></div>
<div class="a" style="left:50px;top:1041px;font-size:12px;font-weight:bold;color:#f2f2f2;line-height:14px">73°F</div>
<div class="a" style="left:50px;top:1056px;font-size:12.5px;color:#d4d4d4;line-height:14px">Sunny</div>
<svg style="left:507px;top:1045px" width="23" height="23"><defs><linearGradient id="wg" x1="0" y1="0" x2="1" y2="1"><stop offset="0" stop-color="#52d0fb"/><stop offset="1" stop-color="#0a8ae6"/></linearGradient></defs><rect x="0" y="0" width="11" height="11" fill="url(#wg)"/><rect x="12" y="0" width="11" height="11" fill="url(#wg)"/><rect x="0" y="12" width="11" height="11" fill="url(#wg)"/><rect x="12" y="12" width="11" height="11" fill="url(#wg)"/></svg>
<div class="a" style="left:543px;top:1040px;width:220px;height:32px;border-radius:16px;background:#2d2d2d;border:1px solid #3a3a3a"></div>
<svg style="left:554px;top:1048px" width="16" height="16"><circle cx="6.5" cy="6.5" r="5.3" stroke="#e8e8e8" stroke-width="1.6" fill="none"/><path d="M10.3 10.3L15 15" stroke="#e8e8e8" stroke-width="1.8"/></svg>
<div class="a" style="left:580px;top:1048px;font-size:14px;color:#dcdcdc;line-height:16px">Search</div>
<svg style="left:712px;top:1041px" width="48" height="30" viewBox="0 0 48 30"><circle cx="22" cy="11" r="10" fill="#f3c866"/><circle cx="19" cy="8" r="2" fill="#e0a94a"/><circle cx="25" cy="14" r="1.5" fill="#e0a94a"/><path d="M2 27L6 18 9 23 12 17 15 24 30 24 33 16 36 22 39 17 42 23 46 25 44 28 4 29Z" fill="#3a4fc0"/><path d="M2 28C12 23 30 24 46 27" stroke="#dfe6f5" stroke-width="2" fill="none"/></svg>
<svg style="left:775px;top:1045px" width="24" height="22"><rect x="0" y="7" width="15" height="15" rx="2" fill="#8a8a8a"/><rect x="8" y="0" width="16" height="15" rx="2" fill="#f0f0f0"/></svg>
<svg style="left:819px;top:1045px" width="24" height="24"><path d="M12 1A11 11 0 1 1 5.5 20.8L1.5 22.5 2.6 18A11 11 0 0 1 12 1Z" fill="#7b68d8"/><rect x="6" y="8" width="8.5" height="8" rx="1.5" fill="#fff"/><path d="M15 11L18.5 8.8V15.2L15 13Z" fill="#fff"/></svg>
<svg style="left:863px;top:1045px" width="24" height="22"><path d="M0 2A2 2 0 0 1 2 0H8L10 2H22A2 2 0 0 1 24 4V20A2 2 0 0 1 22 22H2A2 2 0 0 1 0 20Z" fill="#f8c543"/><rect x="0" y="5" width="24" height="17" rx="1.5" fill="#ffd65c"/><rect x="6" y="14" width="12" height="5" rx="1" fill="#2a7ad5"/></svg>
<svg style="left:906.5px;top:1043.5px" width="25" height="25" viewBox="0 0 25 25"><defs><linearGradient id="eg" x1="0" y1="0" x2="1" y2=".6"><stop offset="0" stop-color="#35c0f2"/><stop offset=".5" stop-color="#2fc6b8"/><stop offset="1" stop-color="#5bd45a"/></linearGradient><linearGradient id="eb" x1="0" y1="0" x2="1" y2="1"><stop offset="0" stop-color="#1b8ee6"/><stop offset="1" stop-color="#0f54a8"/></linearGradient></defs><circle cx="12.5" cy="12.5" r="12" fill="url(#eg)"/><path d="M0.6 11C2 6 8 4.5 12 7.5 9 8 7.5 10.5 8 13.5 8.8 17.5 13 19.5 18 19L23 18.5A12 12 0 0 1 12.5 24.5 12 12 0 0 1 0.6 11Z" fill="url(#eb)"/><path d="M9 12.8C8.8 10 11.2 8.5 13.2 9.2 15 10 14.8 12 13 12.8 15 14.5 19.5 15.2 24.6 14.3L24 17.2C22 18.6 19.5 19.1 17 18.9 12 18.5 9.2 16 9 12.8Z" fill="#1f1f1f"/></svg>
<svg style="left:951px;top:1043.5px" width="24" height="24" viewBox="0 0 24 24"><defs><linearGradient id="fg" x1=".8" y1="0" x2=".2" y2="1"><stop offset="0" stop-color="#ffe14a"/><stop offset=".45" stop-color="#ff8a2a"/><stop offset="1" stop-color="#f22a5a"/></linearGradient><radialGradient id="fp" cx=".5" cy=".4" r=".6"><stop offset="0" stop-color="#a64ef0"/><stop offset="1" stop-color="#6a3bd8"/></radialGradient></defs><path d="M12.5 23.5A11 11 0 0 1 1.5 12.5C1.5 9.5 2.5 7 3.8 5.5L4.5 8 5.5 4.5 6.5 7.5C8 6 10 5.5 11.5 6L14.5 3C15 1.5 15.5 1 16 1 17 3.5 19.5 4.5 21 7 22.5 9 23.5 11 23.5 13A11 11 0 0 1 12.5 23.5Z" fill="url(#fg)"/><circle cx="13.2" cy="12.8" r="4.8" fill="url(#fp)"/><path d="M7.5 9.5C9 8.5 11 8.3 12.8 8.2 11.5 9.5 9 10 8 11.5Z" fill="#ff9a2e"/></svg>
<div class="a" style="left:987px;top:1036px;width:40px;height:40px;border-radius:5px;background:#2b2b2b;border:1px solid #333"></div>
<svg style="left:995px;top:1044px" width="24" height="24" viewBox="0 0 24 24"><path d="M1.61 6A12 12 0 0 1 22.39 6H12A6 6 0 0 0 6.804 15Z" fill="#ea4335"/><path d="M22.39 6A12 12 0 0 1 12 24L17.196 15A6 6 0 0 0 12 6Z" fill="#fbbc04"/><path d="M12 24A12 12 0 0 1 1.61 6L6.804 15A6 6 0 0 0 17.196 15Z" fill="#34a853"/><circle cx="12" cy="12" r="5.6" fill="#fff"/><circle cx="12" cy="12" r="4.5" fill="#1a73e8"/></svg>
<div class="a" style="left:1009px;top:1040px;width:14px;height:14px;border-radius:50%;background:#d8d2cc;overflow:hidden"><div class="a" style="left:4px;top:2px;width:6px;height:8px;border-radius:3px;background:#7a5038"></div><div class="a" style="left:2px;top:10px;width:10px;height:6px;border-radius:5px 5px 0 0;background:#f2f2f2"></div></div>
<div class="a" style="left:999px;top:1072px;width:16px;height:3px;border-radius:2px;background:#5cbcf6"></div>
<svg style="left:1039px;top:1044px" width="24" height="24" viewBox="0 0 24 24"><path d="M1.61 6A12 12 0 0 1 22.39 6H12A6 6 0 0 0 6.804 15Z" fill="#ea4335"/><path d="M22.39 6A12 12 0 0 1 12 24L17.196 15A6 6 0 0 0 12 6Z" fill="#fbbc04"/><path d="M12 24A12 12 0 0 1 1.61 6L6.804 15A6 6 0 0 0 17.196 15Z" fill="#34a853"/><circle cx="12" cy="12" r="5.6" fill="#fff"/><circle cx="12" cy="12" r="4.5" fill="#1a73e8"/></svg>
<div class="a" style="left:1051px;top:1043px;width:12px;height:12px;border-radius:50%;background:#3a3a3a;border:1px solid #888"></div>
<svg style="left:1083px;top:1044px" width="24" height="24" viewBox="0 0 24 24"><path d="M1.61 6A12 12 0 0 1 22.39 6H12A6 6 0 0 0 6.804 15Z" fill="#ea4335"/><path d="M22.39 6A12 12 0 0 1 12 24L17.196 15A6 6 0 0 0 12 6Z" fill="#fbbc04"/><path d="M12 24A12 12 0 0 1 1.61 6L6.804 15A6 6 0 0 0 17.196 15Z" fill="#34a853"/><circle cx="12" cy="12" r="5.6" fill="#fff"/><circle cx="12" cy="12" r="4.5" fill="#1a73e8"/></svg>
<div class="a" style="left:1095px;top:1039px;width:17px;height:17px;border-radius:50%;background:#c5216a;color:#fff;font-size:10px;text-align:center;line-height:17px">S</div>
<div class="a" style="left:1092px;top:1072px;width:6px;height:3px;border-radius:2px;background:#9a9a9a"></div>
<svg style="left:1127px;top:1047px" width="24" height="18"><rect x="0" y="0" width="24" height="18" fill="#c9d7e6"/><path d="M1 15L5 11 8 4 10 13 13 8 15 3 17 12 20 10 23 15V17H1Z" fill="#59a5e6"/><path d="M1 15L5 11 8 4 10 13 13 8 15 3 17 12 20 10 23 15" stroke="#2b7cd3" fill="none"/></svg>
<svg style="left:1171px;top:1046px" width="22" height="19"><rect x="0" y="0" width="22" height="19" fill="#0c0c0c" stroke="#9a9a9a"/><rect x="0.5" y="0.5" width="21" height="3" fill="#c8c8c8"/><path d="M3 6H8M11 10H18" stroke="#d0d0d0" stroke-width="1.2"/></svg>
<svg style="left:1215px;top:1044px" width="24" height="24" viewBox="0 0 24 24"><path d="M4.5 1.3C2 1.3 0.8 3.5 0.8 6.5 0.8 10.5 2.8 14.3 4.8 16 6.3 17.2 7.8 16.3 8.3 14.5L8.8 13.8 9.6 14.2 9.6 20.2C9.6 22.6 11 23.5 12.4 23.5S15.2 22.4 15.2 20V15C16.7 16.4 18.3 16.2 19.6 14.8 21.6 12.6 23.2 9.5 23.2 6.3 23.2 3.3 21.3 1.3 18.8 1.3 17.2 1.3 16 1.8 15 2.4 14 1.8 13 1.5 12 1.5 10.8 1.5 9.6 1.8 8.8 2.3 7.6 1.6 6 1.3 4.5 1.3Z" fill="#336791" stroke="#dfe8f1" stroke-width=".9"/><path d="M8.8 2.3C6.8 4 6.3 8 7.3 11.5 7.8 13 8.5 13.8 9.6 14.2M15 2.4C17 4 17.5 8 16.6 11.3 16.2 12.8 15.7 14 15.2 15M12 6.5C11 9 11 11.5 12.2 14" stroke="#dfe8f1" stroke-width=".8" fill="none"/></svg>
<svg style="left:1259px;top:1044px" width="24" height="24" viewBox="0 0 24 24"><path d="M17 1L23 4V20L17 23 6.5 13.5 2.5 16.5 1 15.5V8.5L2.5 7.5 6.5 10.5Z M17 6.5L10 12 17 17.5Z" fill="#1f9cf0" fill-rule="evenodd"/><path d="M17 1L23 4V20L17 23Z" fill="#0065a9"/></svg>
<svg style="left:1303px;top:1044px" width="24" height="24" viewBox="0 0 24 24"><defs><linearGradient id="pcg" x1="0" y1="0" x2="1" y2="1"><stop offset="0" stop-color="#19c3f0"/><stop offset=".55" stop-color="#21d789"/><stop offset="1" stop-color="#fcf84a"/></linearGradient></defs><path d="M1 2.5A1.5 1.5 0 0 1 2.5 1H14L17 3.5 20.5 5V11L23 14V21.5L20 23H4L1 20Z" fill="url(#pcg)"/><path d="M17 5L21 7V17L23 21 19 23H12Z" fill="#fcf84a" opacity=".9"/><rect x="4.5" y="4.5" width="15" height="15" fill="#000"/><text x="6.2" y="12.8" font-size="8" font-family="Liberation Sans" font-weight="bold" fill="#fff">PC</text><rect x="6.3" y="16.2" width="5" height="1.3" fill="#fff"/></svg>
<svg style="left:1347px;top:1044px" width="24" height="24" viewBox="0 0 24 24"><path d="M12 1L17.8 6.8 12 12.6 6.2 6.8Z" fill="#ef7f7f"/><path d="M17.8 6.8L23.3 12.3 17.8 17.8 12.3 12.3Z" fill="#66c35c"/><path d="M12 12.3L17.5 17.8 12 23.3 6.5 17.8Z" fill="#f7d56a"/><path d="M6.2 6.8L11.7 12.3 6.2 17.8 0.7 12.3Z" fill="#7aa7f0"/><path d="M9.5 3.5L12 9.5 16.5 12.3M12 9.5V19.5" stroke="#1b1b1b" stroke-width="1.3" fill="none"/><circle cx="16.8" cy="12.3" r="1.4" fill="#1b1b1b"/><circle cx="12" cy="19.5" r="1.4" fill="#1b1b1b"/></svg>
<div class="a" style="left:1391px;top:1044px;width:24px;height:24px;background:#fdfdfd"></div>
<svg style="left:1395px;top:1047px" width="16" height="14"><rect x="1" y="1" width="14" height="9" rx="1" fill="none" stroke="#2a8bd0" stroke-width="1.5"/><path d="M5 5L7 7 11 3" stroke="#3cb371" stroke-width="1.5" fill="none"/><path d="M6 12H10" stroke="#2a8bd0" stroke-width="1.5"/></svg>
<div class="a" style="left:1397px;top:1063px;font-size:4px;color:#555;line-height:4px">TaskPro</div>
<div class="a" style="left:1402px;top:1072px;width:6px;height:3px;border-radius:2px;background:#9a9a9a"></div>
<svg style="left:1671px;top:1052px" width="13" height="8"><path d="M1 7L6.5 1.5L12 7" stroke="#f0f0f0" stroke-width="1.5" fill="none"/></svg>
<svg style="left:1700px;top:1049px" width="18" height="13"><path d="M4 12A3.5 3.5 0 0 1 3.5 5 5 5 0 0 1 12.5 3.5 4 4 0 0 1 14 12Z" fill="#c8c8c8"/></svg>
<svg style="left:1733px;top:1050px" width="17" height="13"><rect x=".75" y=".75" width="15.5" height="11.5" rx="1.5" stroke="#f0f0f0" stroke-width="1.3" fill="none"/><path d="M3 3.5H4M5.5 3.5H6.5M8 3.5H9M10.5 3.5H11.5M13 3.5H14M3 6H4M5.5 6H6.5M8 6H9M10.5 6H11.5M13 6H14M5 9H12" stroke="#f0f0f0" stroke-width="1.2"/></svg>
<svg style="left:1764px;top:1048px" width="17" height="15"><path d="M1 5.5A10.5 10.5 0 0 1 16 5.5M3.5 8.3A7 7 0 0 1 13.5 8.3M6 11A3.5 3.5 0 0 1 11 11" stroke="#f0f0f0" stroke-width="1.4" fill="none"/><circle cx="8.5" cy="13.2" r="1.2" fill="#f0f0f0"/></svg>
<svg style="left:1789px;top:1048px" width="18" height="16"><path d="M1 5.5H4L8 2V14L4 10.5H1Z" stroke="#f0f0f0" stroke-width="1.3" fill="none" stroke-linejoin="round"/><path d="M10.5 5.5A3 3 0 0 1 10.5 10.5M12.8 3.3A6 6 0 0 1 12.8 12.7M15 1.5A8.5 8.5 0 0 1 15 14.5" stroke="#f0f0f0" stroke-width="1.3" fill="none"/></svg>
<div class="a" style="left:1816px;top:1041px;width:61px;text-align:right;font-size:12.5px;color:#f2f2f2;line-height:14px">11:24 AM</div>
<div class="a" style="left:1816px;top:1057px;width:61px;text-align:right;font-size:12.5px;color:#f2f2f2;line-height:14px">12/4/2025</div>
<svg style="left:1885px;top:1048px" width="15" height="18"><path d="M7.5 1A5 5 0 0 1 12.5 6V10.5L14.5 13.5H0.5L2.5 10.5V6A5 5 0 0 1 7.5 1Z" fill="#60cdff"/><path d="M5 15A2.5 2.5 0 0 0 10 15Z" fill="#60cdff"/></svg>
<!--/TASK-->
</body></html>
